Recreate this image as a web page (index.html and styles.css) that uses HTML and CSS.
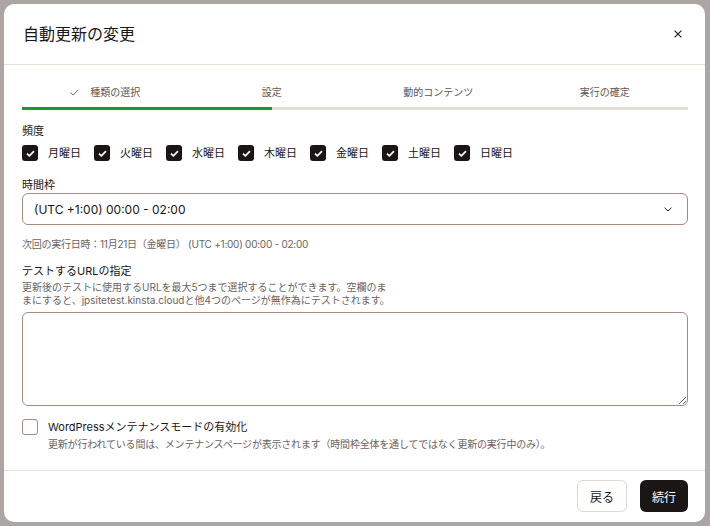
FILE: index.html
```html
<!DOCTYPE html>
<html lang="ja">
<head>
<meta charset="utf-8">
<link rel="stylesheet" href="styles.css">
</head>
<body>
<div class="modal">
  <div class="header">
    <h1 class="title">自動更新の変更</h1>
    <button class="close" aria-label="閉じる">
      <svg width="8" height="8" viewBox="0 0 8 8"><path d="M0.6 0.6L7.4 7.4M7.4 0.6L0.6 7.4" stroke="#1a1616" stroke-width="1.1" fill="none"/></svg>
    </button>
  </div>
  <div class="stepper">
    <div class="step done">
      <div class="step-label"><svg class="step-check" width="9" height="7" viewBox="0 0 9 7"><path d="M0.7 3.6L3.2 6L8.3 0.8" stroke="#6b6361" stroke-width="1" fill="none"/></svg>種類の選択</div>
      <div class="step-bar"></div>
    </div>
    <div class="step current">
      <div class="step-label">設定</div>
      <div class="step-bar"></div>
    </div>
    <div class="step">
      <div class="step-label">動的コンテンツ</div>
      <div class="step-bar"></div>
    </div>
    <div class="step">
      <div class="step-label">実行の確定</div>
      <div class="step-bar"></div>
    </div>
  </div>
  <div class="body">
    <div class="label">頻度</div>
    <div class="days">
      <label class="day"><span class="cb checked"><svg width="9" height="7" viewBox="0 0 9 7"><path d="M1 3.6L3.4 5.8L8 1.2" stroke="#fff" stroke-width="1.7" fill="none"/></svg></span>月曜日</label>
      <label class="day"><span class="cb checked"><svg width="9" height="7" viewBox="0 0 9 7"><path d="M1 3.6L3.4 5.8L8 1.2" stroke="#fff" stroke-width="1.7" fill="none"/></svg></span>火曜日</label>
      <label class="day"><span class="cb checked"><svg width="9" height="7" viewBox="0 0 9 7"><path d="M1 3.6L3.4 5.8L8 1.2" stroke="#fff" stroke-width="1.7" fill="none"/></svg></span>水曜日</label>
      <label class="day"><span class="cb checked"><svg width="9" height="7" viewBox="0 0 9 7"><path d="M1 3.6L3.4 5.8L8 1.2" stroke="#fff" stroke-width="1.7" fill="none"/></svg></span>木曜日</label>
      <label class="day"><span class="cb checked"><svg width="9" height="7" viewBox="0 0 9 7"><path d="M1 3.6L3.4 5.8L8 1.2" stroke="#fff" stroke-width="1.7" fill="none"/></svg></span>金曜日</label>
      <label class="day"><span class="cb checked"><svg width="9" height="7" viewBox="0 0 9 7"><path d="M1 3.6L3.4 5.8L8 1.2" stroke="#fff" stroke-width="1.7" fill="none"/></svg></span>土曜日</label>
      <label class="day"><span class="cb checked"><svg width="9" height="7" viewBox="0 0 9 7"><path d="M1 3.6L3.4 5.8L8 1.2" stroke="#fff" stroke-width="1.7" fill="none"/></svg></span>日曜日</label>
    </div>
    <div class="label label-time">時間枠</div>
    <div class="select">
      <span class="select-value">(UTC +1:00) 00:00 - 02:00</span>
      <svg width="8" height="5" viewBox="0 0 8 5"><path d="M0.6 0.7L4 4L7.4 0.7" stroke="#1a1616" stroke-width="1" fill="none"/></svg>
    </div>
    <div class="hint">次回の実行日時：11月21日（金曜日） (UTC +1:00) 00:00 - 02:00</div>
    <div class="label label-url">テストするURLの指定</div>
    <p class="desc">更新後のテストに使用するURLを最大5つまで選択することができます。空欄のままにすると、jpsitetest.kinsta.cloudと他4つのページが無作為にテストされます。</p>
    <textarea class="urls"></textarea>
    <div class="maint">
      <span class="cb unchecked"></span>
      <div class="maint-text">
        <div class="maint-label">WordPressメンテナンスモードの有効化</div>
        <div class="maint-desc">更新が行われている間は、メンテナンスページが表示されます（時間枠全体を通してではなく更新の実行中のみ）。</div>
      </div>
    </div>
  </div>
  <div class="footer">
    <button class="btn btn-back">戻る</button>
    <button class="btn btn-next">続行</button>
  </div>
</div>
</body>
</html>
```

FILE: styles.css
```css
html, body {
  margin: 0;
  padding: 0;
}
body {
  background: #aba5a4;
  padding: 4px 5px 4px 4px;
  font-family: Inter, "Noto Sans CJK JP", sans-serif;
  color: #1a1616;
}
.modal {
  width: 701px;
  height: 518px;
  background: #fff;
  border-radius: 10px;
  display: flex;
  flex-direction: column;
  overflow: hidden;
}
.header {
  height: 61px;
  flex: none;
  display: flex;
  align-items: center;
  justify-content: space-between;
  padding: 0 21px 0 19px;
  border-bottom: 1px solid #e6e0db;
  box-sizing: border-box;
}
.title {
  margin: 0;
  font-size: 16px;
  font-weight: 400;
  line-height: 20px;
}
.close {
  border: 0;
  background: none;
  padding: 0;
  width: 12px;
  height: 12px;
  display: flex;
  align-items: center;
  justify-content: center;
}
.stepper {
  display: grid;
  grid-template-columns: repeat(4, 1fr);
  padding: 20px 17px 0 18px;
}
.step-label {
  font-size: 10px;
  line-height: 14px;
  color: #5e5654;
  text-align: center;
  margin-bottom: 8px;
  display: flex;
  justify-content: center;
  align-items: center;
}
.step-check {
  margin-right: 11px;
}
.step-bar {
  height: 3px;
  background: #e4ddd6;
}
.step.done .step-bar {
  background: #17993b;
}
.step.current .step-bar {
  background: linear-gradient(to right, #17993b 50%, #e4ddd6 50%);
}
.body {
  padding: 13px 17px 0 18px;
  flex: 1;
  display: flex;
  flex-direction: column;
}
.label {
  font-size: 11px;
  line-height: 16px;
}
.days {
  display: flex;
  gap: 13px;
  margin-top: 6px;
  height: 16px;
}
.day {
  display: flex;
  align-items: center;
  font-size: 11px;
  line-height: 16px;
  width: 59px;
}
.cb {
  width: 16px;
  height: 16px;
  box-sizing: border-box;
  border-radius: 3px;
  margin-right: 10px;
  flex: none;
  display: flex;
  align-items: center;
  justify-content: center;
}
.cb.checked {
  background: #1a1616;
}
.cb.unchecked {
  border: 1px solid #a48c83;
  background: #fff;
}
.label-time {
  margin-top: 16px;
  margin-bottom: 0;
}
.select {
  height: 32px;
  box-sizing: border-box;
  border: 1px solid #a48c83;
  border-radius: 6px;
  display: flex;
  align-items: center;
  justify-content: space-between;
  padding: 0 15px 0 11px;
}
.select-value {
  font-size: 12px;
}
.hint {
  margin-top: 12px;
  font-size: 10px;
  line-height: 14px;
  color: #6b6361;
  letter-spacing: -0.25px;
}
.label-url {
  margin-top: 12px;
}
.desc {
  margin: 2px 0 0;
  font-size: 10px;
  line-height: 13px;
  color: #6b6361;
  max-width: 368px;
}
.urls {
  margin-top: 5px;
  height: 94px;
  box-sizing: border-box;
  border: 1px solid #a48c83;
  border-radius: 6px;
  resize: vertical;
  font-family: inherit;
  width: 100%;
  display: block;
}
.maint {
  margin-top: 13px;
  display: flex;
  align-items: flex-start;
}
.maint-label {
  font-size: 11px;
  line-height: 16px;
}
.maint-desc {
  margin-top: 2px;
  font-size: 10px;
  line-height: 14px;
  color: #6b6361;
  letter-spacing: -0.2px;
}
.footer {
  flex: none;
  height: 52px;
  box-sizing: border-box;
  border-top: 1px solid #e6e0db;
  display: flex;
  justify-content: flex-end;
  align-items: center;
  gap: 13px;
  padding: 0 17px 1px 0;
}
.btn {
  height: 32px;
  border-radius: 6px;
  font-family: inherit;
  font-size: 12px;
  padding: 0;
  cursor: pointer;
}
.btn-back {
  width: 50px;
  background: #fff;
  border: 1px solid #e2dad4;
  color: #1a1616;
}
.btn-next {
  width: 48px;
  background: #1a1616;
  border: 0;
  color: #fff;
}
```
